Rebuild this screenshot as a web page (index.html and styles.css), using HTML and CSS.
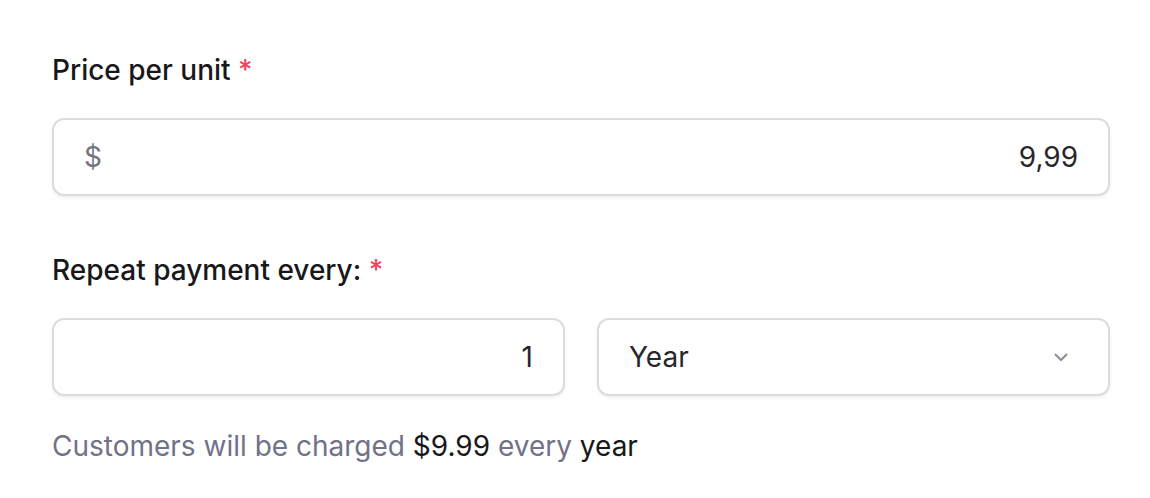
FILE: index.html
```html
<!DOCTYPE html>
<html lang="en">
<head>
<meta charset="utf-8">
<title>Pricing</title>
<link rel="stylesheet" href="styles.css">
</head>
<body>
<form class="form">
  <div class="field">
    <label class="label">Price per unit <span class="req">*</span></label>
    <div class="box">
      <span class="prefix">$</span>
      <span class="value">9,99</span>
    </div>
  </div>
  <div class="field field-second">
    <label class="label">Repeat payment every: <span class="req">*</span></label>
    <div class="row">
      <div class="box box-num">
        <span class="value">1</span>
      </div>
      <div class="box box-select">
        <span class="select-text">Year</span>
        <svg class="chevron" width="14" height="9" viewBox="0 0 14 9" fill="none">
          <path d="M1.5 1.5 L7 7 L12.5 1.5" stroke="#8b8b99" stroke-width="2" stroke-linecap="round" stroke-linejoin="round"/>
        </svg>
      </div>
    </div>
    <p class="help">Customers will be charged <span class="strong">$9.99</span> every <span class="strong">year</span></p>
  </div>
</form>
</body>
</html>
```

FILE: styles.css
```css
* { box-sizing: border-box; }
html, body { margin: 0; padding: 0; background: #ffffff; }
body {
  font-family: Inter, "Noto Sans", sans-serif;
  color: #18181b;
}
.form {
  width: 1058px;
  margin: 0 0 0 52px;
  padding-top: 50px;
}
.field { display: flex; flex-direction: column; }
.field-second { margin-top: 54px; }
.label {
  font-size: 28px;
  line-height: 40px;
  font-weight: 500;
  color: #18181b;
  margin-bottom: 28px;
}
.req { color: #f43f5e; }
.box {
  height: 78px;
  border: 2px solid #dcdce0;
  border-radius: 12px;
  box-shadow: 0 2px 3px rgba(0, 0, 0, 0.06);
  background: #fff;
  display: flex;
  align-items: center;
  padding: 0 30px;
  font-size: 28px;
  line-height: 40px;
}
.prefix { color: #737385; }
.value { margin-left: auto; color: #27272a; }
.row {
  display: grid;
  grid-template-columns: 1fr 1fr;
  gap: 32px;
}
.box-select { justify-content: space-between; padding-right: 40px; }
.select-text { color: #27272a; }
.chevron { display: block; }
.help {
  margin: 30px 0 0 0;
  font-size: 28px;
  line-height: 40px;
  color: #71718a;
}
.strong { color: #18181b; }
```
